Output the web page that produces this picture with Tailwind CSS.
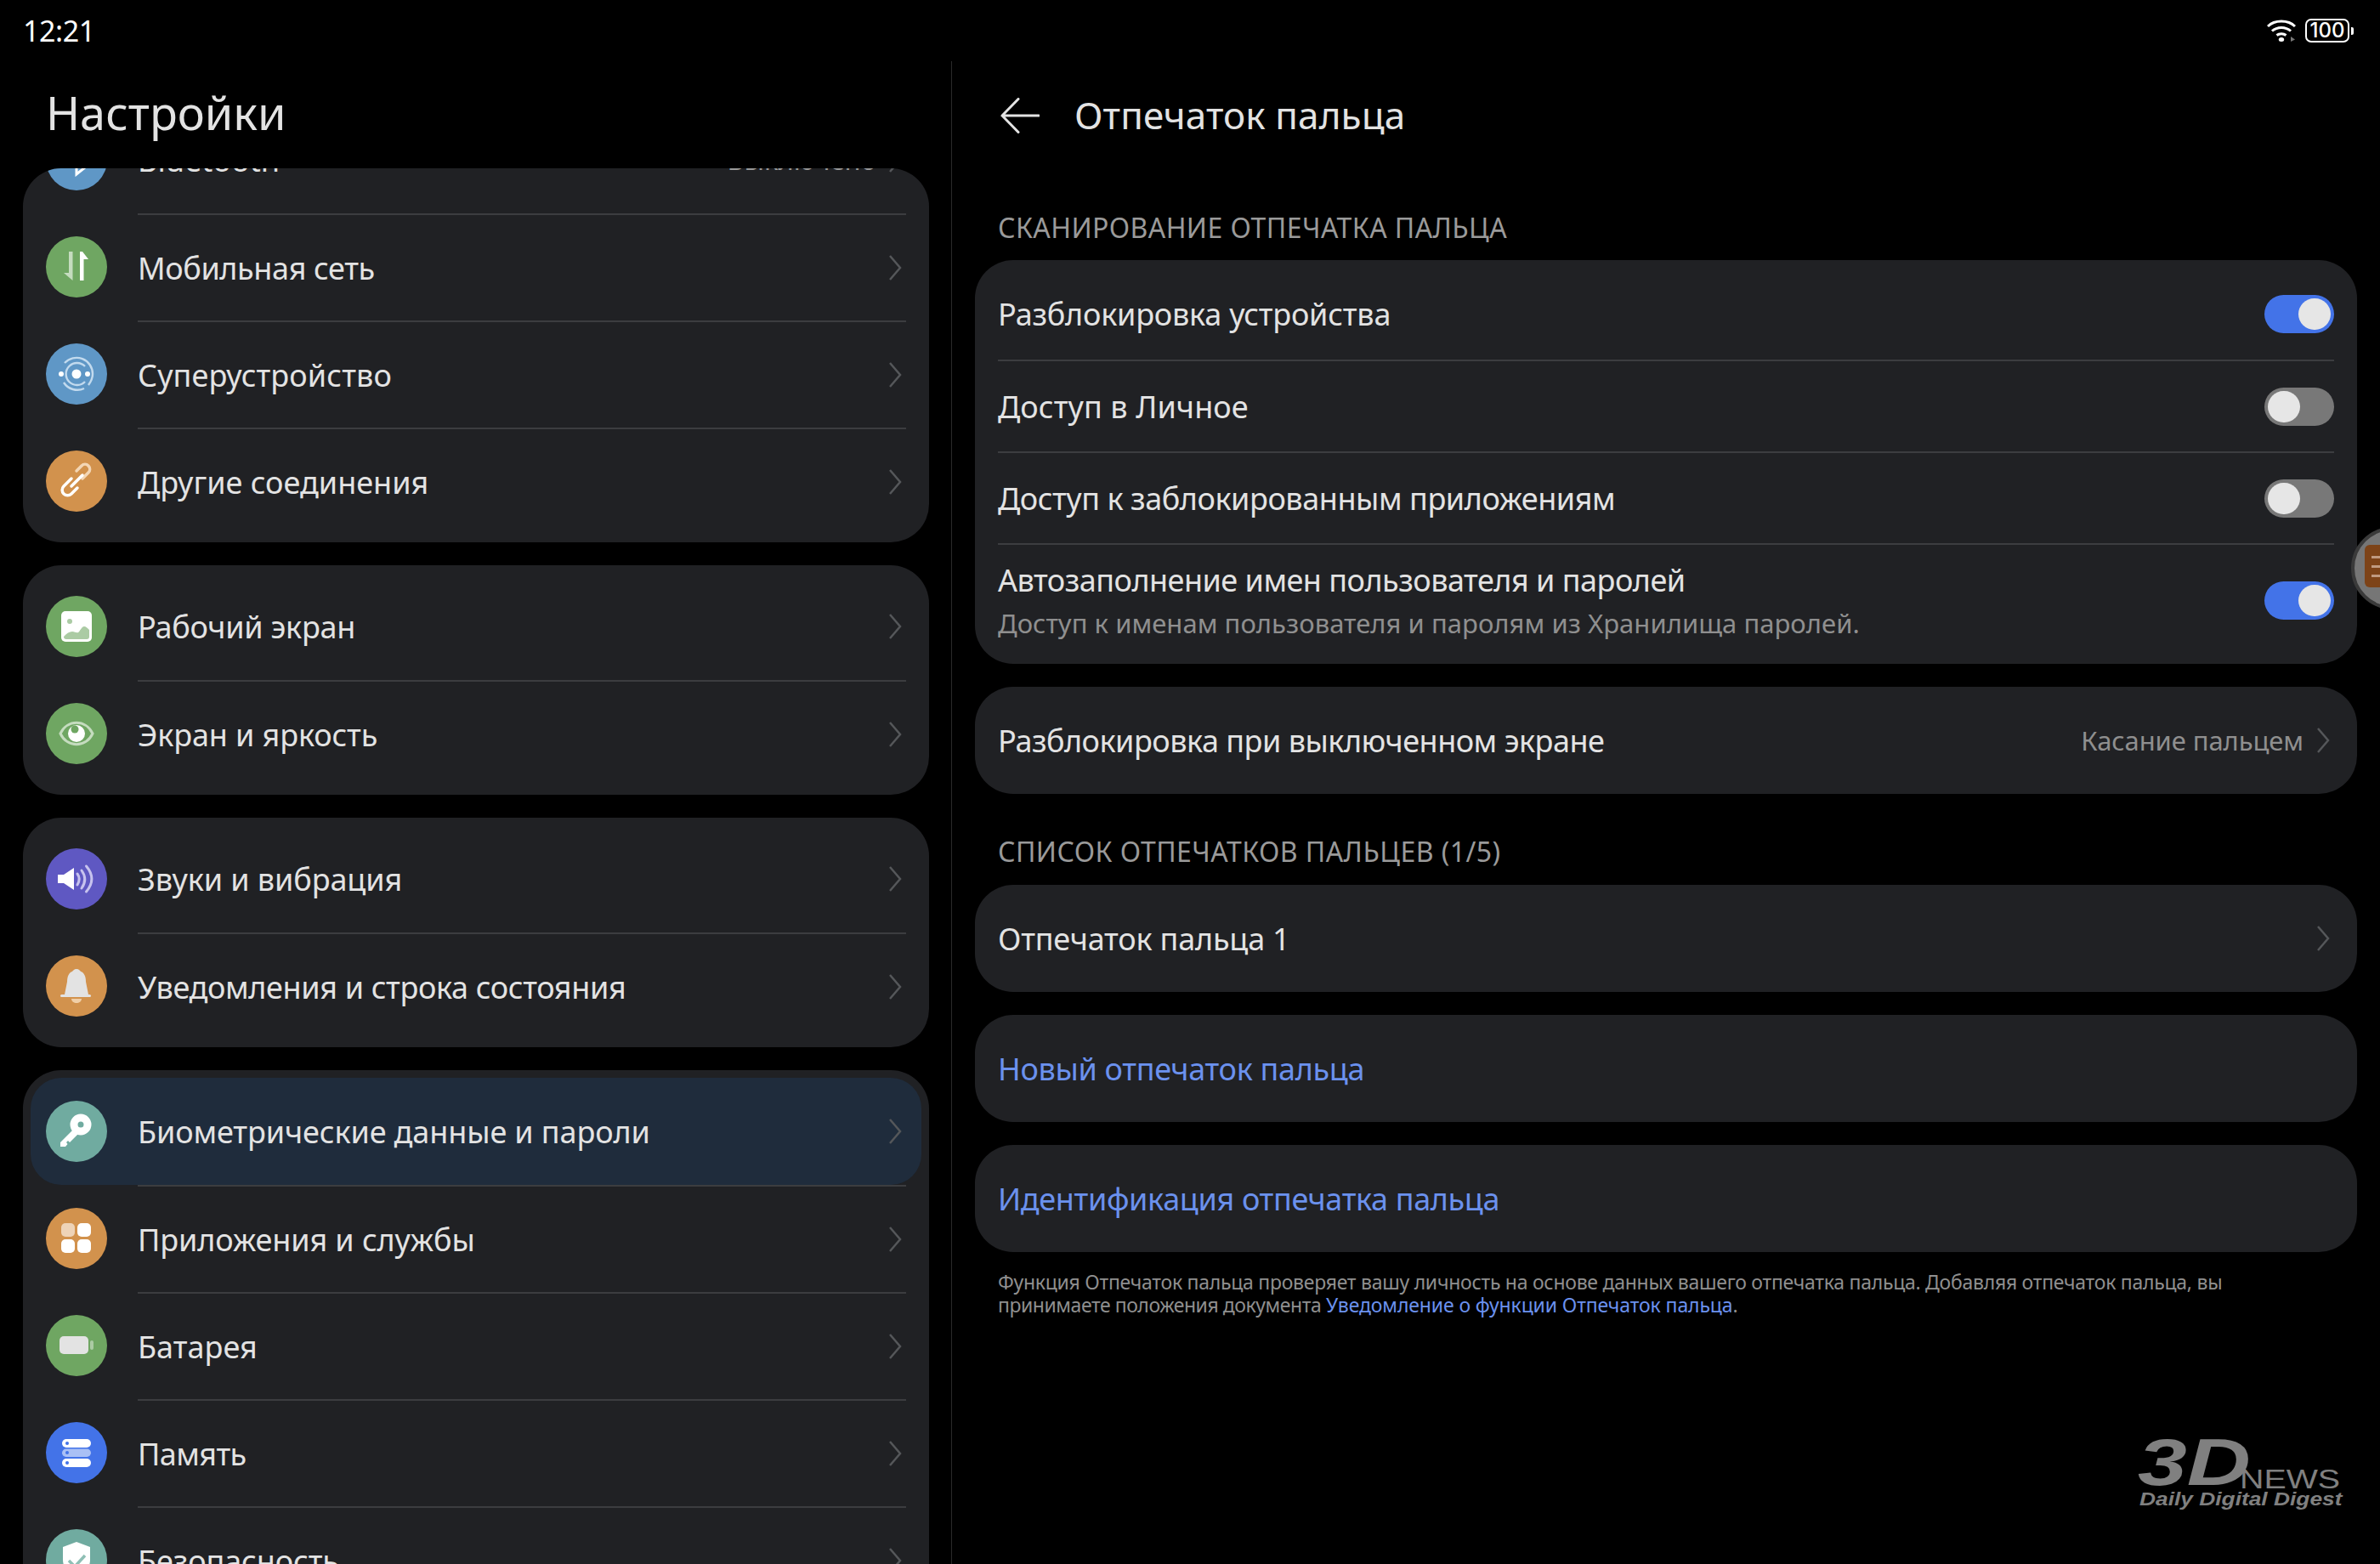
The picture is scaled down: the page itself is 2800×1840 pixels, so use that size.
<!DOCTYPE html>
<html lang="ru"><head><meta charset="utf-8"><script src="https://cdn.jsdelivr.net/npm/@tailwindcss/browser@4"></script></head>
<body class="bg-black">
<div class="relative w-[2800px] h-[1840px] overflow-hidden bg-black text-[#e3e3e3] font-['Noto_Sans','Liberation_Sans',sans-serif]">
  <!-- status bar -->
  <div class="flex justify-between items-center h-[40px] mt-[16px] pl-[27px] pr-[31px] absolute inset-x-0 top-0 text-white">
    <span class="text-[34px] tracking-[-0.4px]">12:21</span>
    <div class="flex items-center gap-[11px]">
      <svg width="34" height="28" viewBox="0 0 34 28" fill="none" stroke="#fff" stroke-width="3"><path d="M1 9C9 1 25 1 33 9"/><path d="M6 14.500C12 9 22 9 28 14.500"/><path d="M11.500 19.500C14.500 17 19.500 17 22.500 19.500"/><ellipse cx="17" cy="24.500" rx="3.200" ry="2.500" fill="#fff" stroke="none"/><path d="M28 21L33 24.500L28 27Z" fill="#777" stroke="none"/></svg>
      <div class="flex items-center gap-[2px]">
        <div class="w-[52px] h-[28px] border-2 border-white rounded-[7px] flex items-center justify-center text-[24px] font-medium leading-none font-['Inter',sans-serif]">100</div>
        <div class="w-[3px] h-[9px] bg-white rounded-r-[2px]"></div>
      </div>
    </div>
  </div>

  <div class="flex h-full">
    <!-- left -->
    <div class="w-[1119px] shrink-0 flex flex-col pl-[27px] pr-[26px]">
      <h1 class="h-[198px] shrink-0 pt-[95px] pl-[27px] text-[54px] leading-[74px] font-normal">Настройки</h1>
      <div class="flex flex-col gap-[27px] shrink-0">
        <!-- card 1 -->
        <div class="bg-[#202124] rounded-[45px] overflow-hidden h-[440px] shrink-0">
          <div class="-mt-[73px] flex flex-col">
            <div class="flex items-center h-[126px] pl-[27px] pr-[27px]">
              <div class="w-[72px] h-[72px] rounded-full bg-[#5f97c6] shrink-0 flex items-center justify-center"><svg width="28" height="40" viewBox="0 0 28 40" fill="none" stroke="#fff" stroke-width="3"><path d="M3 11L24 29L14 37V3L24 11L3 29"/></svg></div>
              <div class="ml-[36px] flex-1 h-full flex items-center justify-between text-[36px]"><span class="pt-[1px]">Bluetooth</span><span class="flex items-center gap-[14px] text-[31px] text-[#9a9a9a] pr-[5px]">Выключено<svg class="w-[16px] h-[30px]" viewBox="0 0 16 30" fill="none" stroke="#55575a" stroke-width="2.500"><path d="M2 1L14 15L2 29"/></svg></span></div>
            </div>
            <div class="flex items-center h-[126px] pl-[27px] pr-[27px]">
              <div class="w-[72px] h-[72px] rounded-full bg-[#6fa662] shrink-0 flex items-center justify-center"><svg width="72" height="72" viewBox="0 0 72 72"><path d="M27 18H31.500V52L21 43H27Z" fill="#c5dcbf"/><path d="M40 18H43L50 27H44.500V52H40Z" fill="#fff"/></svg></div>
              <div class="ml-[36px] flex-1 h-[126px] border-t-2 border-[#3c3d40] flex items-center justify-between text-[36px]"><span class="pt-[1px] tracking-[-0.38px]">Мобильная сеть</span><svg class="w-[16px] h-[30px] mr-[5px]" viewBox="0 0 16 30" fill="none" stroke="#55575a" stroke-width="2.500"><path d="M2 1L14 15L2 29"/></svg></div>
            </div>
            <div class="flex items-center h-[126px] pl-[27px] pr-[27px]">
              <div class="w-[72px] h-[72px] rounded-full bg-[#5f97c6] shrink-0 flex items-center justify-center"><svg width="72" height="72" viewBox="0 0 72 72" fill="none"><circle cx="36" cy="36" r="5.500" fill="#fff"/><circle cx="18" cy="36" r="3" fill="#fff"/><circle cx="49" cy="36" r="3" fill="#fff"/><path d="M46 27A13 13 0 1 0 46 45" stroke="#c2daee" stroke-width="2.400"/><path d="M22 23A19 19 0 0 1 55 36C55 40 53 45 50 49" stroke="#c2daee" stroke-width="2.400"/><path d="M45 53A19 19 0 0 1 21 46" stroke="#c2daee" stroke-width="2.400"/></svg></div>
              <div class="ml-[36px] flex-1 h-[126px] border-t-2 border-[#3c3d40] flex items-center justify-between text-[36px]"><span class="pt-[1px] tracking-[0.1px]">Суперустройство</span><svg class="w-[16px] h-[30px] mr-[5px]" viewBox="0 0 16 30" fill="none" stroke="#55575a" stroke-width="2.500"><path d="M2 1L14 15L2 29"/></svg></div>
            </div>
            <div class="flex items-center h-[126px] pl-[27px] pr-[27px]">
              <div class="w-[72px] h-[72px] rounded-full bg-[#d2924d] shrink-0 flex items-center justify-center"><svg width="72" height="72" viewBox="0 0 72 72" fill="none" stroke-width="3.500" stroke-linecap="round"><path d="M43 33L50 26A5.500 5.500 0 0 0 42 18L36 24" stroke="#f3d6b5"/><path d="M30 42L43 29" stroke="#fff"/><path d="M30 33L21 42A6 6 0 0 0 30 51L37 44" stroke="#fff"/></svg></div>
              <div class="ml-[36px] flex-1 h-[126px] border-t-2 border-[#3c3d40] flex items-center justify-between text-[36px]"><span class="pt-[1px]">Другие соединения</span><svg class="w-[16px] h-[30px] mr-[5px]" viewBox="0 0 16 30" fill="none" stroke="#55575a" stroke-width="2.500"><path d="M2 1L14 15L2 29"/></svg></div>
            </div>
          </div>
        </div>
        <!-- card 2 -->
        <div class="bg-[#202124] rounded-[45px] py-[9px] shrink-0">
          <div class="flex items-center h-[126px] pl-[27px] pr-[27px]">
            <div class="w-[72px] h-[72px] rounded-full bg-[#6fa662] shrink-0 flex items-center justify-center"><svg width="72" height="72" viewBox="0 0 72 72"><rect x="18" y="18" width="36" height="36" rx="5" fill="#fff"/><circle cx="28" cy="30" r="3" fill="#abcba4"/><path d="M21 48C24 44 28 42 31 42C34 42 36 44 38 43C40 42 42 36 45 36C47 36 49 38 51 40V48C51 50 50 51 48 51H24C22 51 21 50 21 48Z" fill="#abcba4"/></svg></div>
            <div class="ml-[36px] flex-1 h-[126px] flex items-center justify-between text-[36px]"><span class="pt-[1px] tracking-[-0.27px]">Рабочий экран</span><svg class="w-[16px] h-[30px] mr-[5px]" viewBox="0 0 16 30" fill="none" stroke="#55575a" stroke-width="2.500"><path d="M2 1L14 15L2 29"/></svg></div>
          </div>
          <div class="flex items-center h-[126px] pl-[27px] pr-[27px]">
            <div class="w-[72px] h-[72px] rounded-full bg-[#6fa662] shrink-0 flex items-center justify-center"><svg width="72" height="72" viewBox="0 0 72 72" fill="none"><path d="M17 36C25 19 47 19 55 36C47 53 25 53 17 36Z" stroke="#c5dcbf" stroke-width="3"/><circle cx="36" cy="36" r="10" fill="#fff"/><circle cx="34" cy="31" r="4.500" fill="#6fa662"/></svg></div>
            <div class="ml-[36px] flex-1 h-[126px] border-t-2 border-[#3c3d40] flex items-center justify-between text-[36px]"><span class="pt-[1px] tracking-[-0.12px]">Экран и яркость</span><svg class="w-[16px] h-[30px] mr-[5px]" viewBox="0 0 16 30" fill="none" stroke="#55575a" stroke-width="2.500"><path d="M2 1L14 15L2 29"/></svg></div>
          </div>
        </div>
        <!-- card 3 -->
        <div class="bg-[#202124] rounded-[45px] py-[9px] shrink-0">
          <div class="flex items-center h-[126px] pl-[27px] pr-[27px]">
            <div class="w-[72px] h-[72px] rounded-full bg-[#5f58c2] shrink-0 flex items-center justify-center"><svg width="72" height="72" viewBox="0 0 72 72" fill="none"><path d="M14 31H21L33 23V49L21 41H14Z" fill="#fff"/><path d="M37 30C40 34 40 38 37 43" stroke="#c7c3ee" stroke-width="3" stroke-linecap="round"/><path d="M42 26C47 33 47 40 42 47" stroke="#c7c3ee" stroke-width="3" stroke-linecap="round"/><path d="M47.500 21C56 31 56 41 47.500 51" stroke="#c7c3ee" stroke-width="3" stroke-linecap="round"/></svg></div>
            <div class="ml-[36px] flex-1 h-[126px] flex items-center justify-between text-[36px]"><span class="pt-[1px] tracking-[-0.1px]">Звуки и вибрация</span><svg class="w-[16px] h-[30px] mr-[5px]" viewBox="0 0 16 30" fill="none" stroke="#55575a" stroke-width="2.500"><path d="M2 1L14 15L2 29"/></svg></div>
          </div>
          <div class="flex items-center h-[126px] pl-[27px] pr-[27px]">
            <div class="w-[72px] h-[72px] rounded-full bg-[#d2924d] shrink-0 flex items-center justify-center"><svg width="72" height="72" viewBox="0 0 72 72"><path d="M36 16C33 16 32 18 31 19C27 20 25 25 25 31L22 46H50L47 31C47 25 45 20 41 19C40 18 39 16 36 16Z" fill="#e3e3e3"/><rect x="17" y="46" width="36" height="3" rx="1.500" fill="#e3e3e3"/><path d="M30 51H42C42 54 39 56 36 56C33 56 30 54 30 51Z" fill="#f0cfa8"/></svg></div>
            <div class="ml-[36px] flex-1 h-[126px] border-t-2 border-[#3c3d40] flex items-center justify-between text-[36px]"><span class="pt-[1px] tracking-[-0.36px]">Уведомления и строка состояния</span><svg class="w-[16px] h-[30px] mr-[5px]" viewBox="0 0 16 30" fill="none" stroke="#55575a" stroke-width="2.500"><path d="M2 1L14 15L2 29"/></svg></div>
          </div>
        </div>
        <!-- card 4 -->
        <div class="bg-[#202124] rounded-[45px] py-[9px] relative shrink-0">
          <div class="absolute left-[9px] right-[9px] top-[9px] h-[126px] rounded-[36px] bg-[#1f2c3c]"></div>
          <div class="relative flex items-center h-[126px] pl-[27px] pr-[27px]">
            <div class="w-[72px] h-[72px] rounded-full bg-[#70aba0] shrink-0 flex items-center justify-center"><svg width="72" height="72" viewBox="0 0 72 72"><path fill-rule="evenodd" d="M41 15.500A12.500 12.500 0 1 1 41 40.500A12.500 12.500 0 1 1 41 15.500ZM41 24.500A3.500 3.500 0 1 0 41 31.500A3.500 3.500 0 1 0 41 24.500Z" fill="#fff"/><path d="M33 33L17 49V54H23L25.500 51L24 49L26 47L28 49L38 39Z" fill="#fff"/></svg></div>
            <div class="ml-[36px] flex-1 h-[126px] flex items-center justify-between text-[36px]"><span class="pt-[1px] tracking-[-0.12px]">Биометрические данные и пароли</span><svg class="w-[16px] h-[30px] mr-[5px]" viewBox="0 0 16 30" fill="none" stroke="#55575a" stroke-width="2.500"><path d="M2 1L14 15L2 29"/></svg></div>
          </div>
          <div class="relative flex items-center h-[126px] pl-[27px] pr-[27px]">
            <div class="w-[72px] h-[72px] rounded-full bg-[#d2924d] shrink-0 flex items-center justify-center"><svg width="72" height="72" viewBox="0 0 72 72"><rect x="18" y="18" width="16" height="16" rx="5" fill="#eed3b7"/><rect x="37" y="18" width="16" height="16" rx="5" fill="#fff"/><rect x="18" y="37" width="16" height="16" rx="5" fill="#fff"/><rect x="37" y="37" width="16" height="16" rx="5" fill="#fff"/></svg></div>
            <div class="ml-[36px] flex-1 h-[126px] border-t-2 border-[#3c3d40] flex items-center justify-between text-[36px]"><span class="pt-[1px] tracking-[-0.1px]">Приложения и службы</span><svg class="w-[16px] h-[30px] mr-[5px]" viewBox="0 0 16 30" fill="none" stroke="#55575a" stroke-width="2.500"><path d="M2 1L14 15L2 29"/></svg></div>
          </div>
          <div class="relative flex items-center h-[126px] pl-[27px] pr-[27px]">
            <div class="w-[72px] h-[72px] rounded-full bg-[#6fa662] shrink-0 flex items-center justify-center"><svg width="72" height="72" viewBox="0 0 72 72"><rect x="16" y="25" width="34" height="21" rx="5" fill="#e3e3e3"/><rect x="52" y="30" width="4" height="11" rx="2" fill="#abcba4"/></svg></div>
            <div class="ml-[36px] flex-1 h-[126px] border-t-2 border-[#3c3d40] flex items-center justify-between text-[36px]"><span class="pt-[1px]">Батарея</span><svg class="w-[16px] h-[30px] mr-[5px]" viewBox="0 0 16 30" fill="none" stroke="#55575a" stroke-width="2.500"><path d="M2 1L14 15L2 29"/></svg></div>
          </div>
          <div class="relative flex items-center h-[126px] pl-[27px] pr-[27px]">
            <div class="w-[72px] h-[72px] rounded-full bg-[#4373e8] shrink-0 flex items-center justify-center"><svg width="72" height="72" viewBox="0 0 72 72"><rect x="19" y="20" width="34" height="10" rx="5" fill="#fff"/><rect x="19" y="31.500" width="34" height="9.500" rx="4.700" fill="#a9c0f5"/><rect x="19" y="43" width="34" height="10" rx="5" fill="#fff"/><circle cx="25" cy="25" r="2" fill="#4373e8"/><circle cx="25" cy="36" r="2" fill="#4373e8"/><circle cx="25" cy="48" r="2" fill="#4373e8"/></svg></div>
            <div class="ml-[36px] flex-1 h-[126px] border-t-2 border-[#3c3d40] flex items-center justify-between text-[36px]"><span class="pt-[1px] tracking-[-0.6px]">Память</span><svg class="w-[16px] h-[30px] mr-[5px]" viewBox="0 0 16 30" fill="none" stroke="#55575a" stroke-width="2.500"><path d="M2 1L14 15L2 29"/></svg></div>
          </div>
          <div class="relative flex items-center h-[126px] pl-[27px] pr-[27px]">
            <div class="w-[72px] h-[72px] rounded-full bg-[#70aba0] shrink-0 flex items-center justify-center"><svg width="72" height="72" viewBox="0 0 72 72" fill="none"><path d="M36 15L52 21V36C52 46 45 53 36 58C27 53 20 46 20 36V21Z" fill="#fff"/><path d="M27 37L34 44L46 31" stroke="#8fbfb5" stroke-width="3.500"/></svg></div>
            <div class="ml-[36px] flex-1 h-[126px] border-t-2 border-[#3c3d40] flex items-center justify-between text-[36px]"><span class="pt-[1px] tracking-[-0.1px]">Безопасность</span><svg class="w-[16px] h-[30px] mr-[5px]" viewBox="0 0 16 30" fill="none" stroke="#55575a" stroke-width="2.500"><path d="M2 1L14 15L2 29"/></svg></div>
          </div>
        </div>
      </div>
    </div>

    <!-- divider -->
    <div class="w-[1px] h-[1768px] mt-[72px] bg-[#2a2a2a] shrink-0"></div>

    <!-- right -->
    <div class="flex-1 flex flex-col pl-[27px] pr-[27px]">
      <div class="h-[236px] shrink-0 pt-[103px] flex items-start pl-[30px]">
        <svg class="w-[46px] h-[42px] mt-[12px] shrink-0" viewBox="0 0 46 42" fill="none" stroke="#e3e3e3" stroke-width="3" stroke-linecap="round"><path d="M45 21H2M21 1.500L2 21L21 40.500"/></svg>
        <span class="ml-[41px] text-[44px] leading-[64px] tracking-[0.1px]">Отпечаток пальца</span>
      </div>
      <div class="h-[70px] shrink-0 pl-[27px] text-[32px] leading-[64px] text-[#9a9a9a] tracking-[0.43px]">СКАНИРОВАНИЕ ОТПЕЧАТКА ПАЛЬЦА</div>
      <div class="bg-[#202124] rounded-[45px] py-[9px] pl-[27px] pr-[27px] shrink-0">
        <div class="flex items-center justify-between h-[108px] text-[36px]">
          <span class="pt-[1px] tracking-[-0.22px]">Разблокировка устройства</span>
          <div class="w-[82px] h-[45px] rounded-full bg-[#4373e8] flex justify-end items-center pr-[4px]"><div class="w-[38px] h-[37px] rounded-full bg-[#e6e6e6]"></div></div>
        </div>
        <div class="flex items-center justify-between h-[108px] text-[36px] border-t-2 border-[#3c3d40]">
          <span class="pt-[1px] tracking-[0.1px]">Доступ в Личное</span>
          <div class="w-[82px] h-[45px] rounded-full bg-[#787878] flex items-center pl-[4px]"><div class="w-[38px] h-[37px] rounded-full bg-[#e6e6e6]"></div></div>
        </div>
        <div class="flex items-center justify-between h-[108px] text-[36px] border-t-2 border-[#3c3d40]">
          <span class="pt-[1px] tracking-[-0.45px]">Доступ к заблокированным приложениям</span>
          <div class="w-[82px] h-[45px] rounded-full bg-[#787878] flex items-center pl-[4px]"><div class="w-[38px] h-[37px] rounded-full bg-[#e6e6e6]"></div></div>
        </div>
        <div class="flex items-center justify-between h-[133px] border-t-2 border-[#3c3d40]">
          <div class="flex flex-col pt-[2px]">
            <span class="text-[36px] leading-[50px] tracking-[-0.51px]">Автозаполнение имен пользователя и паролей</span>
            <span class="text-[31px] leading-[50px] text-[#8f8f8f] tracking-[0.03px]">Доступ к именам пользователя и паролям из Хранилища паролей.</span>
          </div>
          <div class="w-[82px] h-[45px] rounded-full bg-[#4373e8] flex justify-end items-center pr-[4px]"><div class="w-[38px] h-[37px] rounded-full bg-[#e6e6e6]"></div></div>
        </div>
      </div>
      <div class="mt-[27px] h-[126px] shrink-0 bg-[#202124] rounded-[45px] pl-[27px] pr-[32px] flex items-center justify-between text-[36px]">
        <span class="pt-[1px] tracking-[-0.5px]">Разблокировка при выключенном экране</span>
        <span class="flex items-center gap-[15px] text-[31px] text-[#8f8f8f]"><span class="tracking-[-0.1px]">Касание пальцем</span><svg class="w-[16px] h-[30px]" viewBox="0 0 16 30" fill="none" stroke="#55575a" stroke-width="2.500"><path d="M2 1L14 15L2 29"/></svg></span>
      </div>
      <div class="h-[107px] shrink-0 pl-[27px] pt-[36px] text-[32px] leading-[64px] text-[#9a9a9a] tracking-[0.45px]">СПИСОК ОТПЕЧАТКОВ ПАЛЬЦЕВ (1/5)</div>
      <div class="h-[126px] shrink-0 bg-[#202124] rounded-[45px] pl-[27px] pr-[32px] flex items-center justify-between text-[36px]">
        <span class="pt-[1px] tracking-[-0.2px]">Отпечаток пальца 1</span>
        <svg class="w-[16px] h-[30px]" viewBox="0 0 16 30" fill="none" stroke="#55575a" stroke-width="2.500"><path d="M2 1L14 15L2 29"/></svg>
      </div>
      <div class="mt-[27px] h-[126px] shrink-0 bg-[#202124] rounded-[45px] pl-[27px] flex items-center text-[36px] text-[#6b91ee]"><span class="pt-[1px] tracking-[-0.32px]">Новый отпечаток пальца</span></div>
      <div class="mt-[27px] h-[126px] shrink-0 bg-[#202124] rounded-[45px] pl-[27px] flex items-center text-[36px] text-[#6b91ee]"><span class="pt-[1px] tracking-[-0.36px]">Идентификация отпечатка пальца</span></div>
      <p class="mt-[22px] pl-[27px] text-[23px] leading-[27px] tracking-[-0.27px] text-[#8f8f8f]">Функция Отпечаток пальца проверяет вашу личность на основе данных вашего отпечатка пальца. Добавляя отпечаток пальца, вы<br><span class="tracking-[-0.45px]">принимаете положения документа</span> <span class="text-[#6b91ee] tracking-[-0.12px]">Уведомление о функции Отпечаток пальца</span>.</p>
    </div>
  </div>

  <!-- floating dock -->
  <div class="absolute left-[2766px] top-[620px] w-[97px] h-[97px] rounded-full bg-[#767676] border-[4px] border-[#3a3a3a]">
    <div class="absolute left-[12px] top-[17px] w-[50px] h-[50px] rounded-[6px] bg-[#7d4318] flex flex-col justify-center gap-[8px] pl-[8px]">
      <div class="h-[3px] w-[20px] bg-[#c09a80]"></div><div class="h-[3px] w-[20px] bg-[#c09a80]"></div><div class="h-[3px] w-[20px] bg-[#c09a80]"></div>
    </div>
  </div>

  <!-- watermark -->
  <div class="absolute left-[2515px] top-[1690px] w-[245px] h-[90px] text-[#808080] font-['Liberation_Sans',sans-serif]">
    <span class="absolute left-0 top-[-6px] text-[77px] leading-[72px] font-bold italic origin-left scale-x-[1.35]">3D</span>
    <span class="absolute left-[120px] top-[36px] text-[31px] leading-[30px] origin-left scale-x-[1.27]">NEWS</span>
    <span class="absolute left-[2px] top-[63px] text-[22.500px] leading-[22px] font-bold italic whitespace-nowrap origin-left scale-x-[1.17]">Daily Digital Digest</span>
  </div>
</div>
</body></html>
